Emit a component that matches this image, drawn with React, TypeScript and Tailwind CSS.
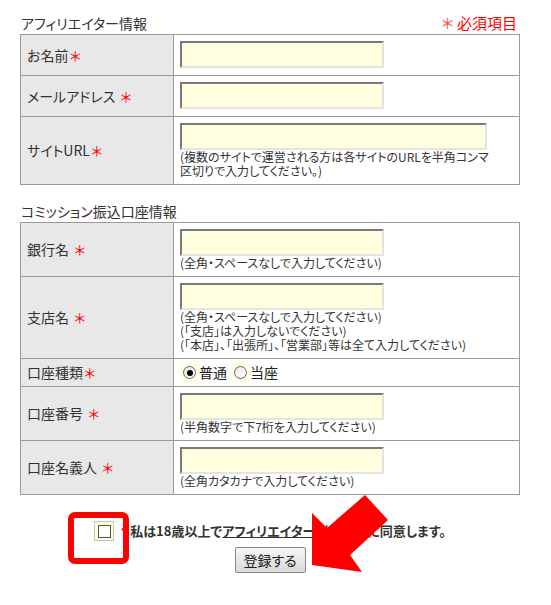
import React from "react";

const font = "font-['Noto_Sans_CJK_JP','Noto_Sans_CJK_SC',sans-serif] [font-feature-settings:'palt']";

function Req({ space }: { space?: boolean }) {
  return <span className={"text-[#ff0000] " + (space ? "ml-[5px]" : "ml-[1px]")}>＊</span>;
}

function TextInput({ wide }: { wide?: boolean }) {
  return (
    <input
      type="text"
      className={
        "block h-[27px] border-2 border-t-[#7a7a7a] border-l-[#7a7a7a] border-r-[#e4e4e4] border-b-[#e4e4e4] bg-[#ffffe0] outline-none " +
        (wide ? "w-[307px]" : "w-[204px]")
      }
    />
  );
}

function Help({ lines }: { lines: string[] }) {
  return (
    <div className="whitespace-nowrap text-[12px] leading-[14px] text-[#333]">
      {lines.map((l) => (
        <div key={l}>{l}</div>
      ))}
    </div>
  );
}

function Row({ label, children, radio }: { label: React.ReactNode; children: React.ReactNode; radio?: boolean }) {
  return (
    <>
      <div className="flex items-center border-r border-b border-[#9a9a9a] bg-[#e8e8e8] pl-[6px] text-[14px] text-[#333]">
        {label}
      </div>
      <div
        className={
          "border-r border-b border-[#9a9a9a] bg-white pl-[6px] " +
          (radio ? "flex h-[28px] items-center" : "pt-[6px] pb-[6px]")
        }
      >
        {children}
      </div>
    </>
  );
}

function Radio({ checked, label }: { checked?: boolean; label: string }) {
  return (
    <span className="inline-flex items-center text-[14px] text-[#222]">
      <span className="flex h-[19px] w-[19px] items-center justify-center bg-[#ffffe0]">
        <span className="flex h-[13px] w-[13px] items-center justify-center rounded-full border border-[#666] bg-gradient-to-br from-[#e8e8e8] to-white">
          {checked && <span className="h-[6px] w-[6px] rounded-full bg-black" />}
        </span>
      </span>
      {label}
    </span>
  );
}

export default function App() {
  return (
    <div className={"relative h-[605px] w-[551px] overflow-hidden bg-white " + font}>
      <div className="ml-[20px] w-[500px]">
        <div className="mt-[14px] mb-[3px] flex h-[17px] items-end justify-between pl-[1px] pr-[3px]">
          <span className="text-[14px] leading-[16px] text-[#333]">アフィリエイター情報</span>
          <span className="text-[15px] leading-[17px] text-[#ff0000]">
            <span className="text-[#ff5050]">＊</span> 必須項目
          </span>
        </div>
        <div className="grid grid-cols-[153px_1fr] border-l border-t border-[#9a9a9a]">
          <Row label={<>お名前<Req /></>}>
            <div className="pb-[1px]">
              <TextInput />
            </div>
          </Row>
          <Row label={<>メールアドレス<Req space /></>}>
            <div className="pb-[1px]">
              <TextInput />
            </div>
          </Row>
          <Row label={<>サイトURL<Req /></>}>
            <TextInput wide />
            <Help lines={["(複数のサイトで運営される方は各サイトのURLを半角コンマ", "区切りで入力してください。)"]} />
          </Row>
        </div>

        <div className="mt-[18px] mb-[3px] pl-[1px] text-[14px] leading-[16px] text-[#333]">
          コミッション振込口座情報
        </div>
        <div className="grid grid-cols-[153px_1fr] border-l border-t border-[#9a9a9a]">
          <Row label={<>銀行名<Req space /></>}>
            <TextInput />
            <Help lines={["(全角・スペースなしで入力してください)"]} />
          </Row>
          <Row label={<>支店名<Req space /></>}>
            <TextInput />
            <Help
              lines={[
                "(全角・スペースなしで入力してください)",
                "(「支店」は入力しないでください)",
                "(「本店」、「出張所」、「営業部」等は全て入力してください)",
              ]}
            />
          </Row>
          <Row label={<>口座種類<Req /></>} radio>
            <div className="flex items-center gap-[4px]">
              <Radio checked label="普通" />
              <Radio label="当座" />
            </div>
          </Row>
          <Row label={<>口座番号<Req space /></>}>
            <TextInput />
            <Help lines={["(半角数字で下7桁を入力してください)"]} />
          </Row>
          <Row label={<>口座名義人<Req space /></>}>
            <TextInput />
            <Help lines={["(全角カタカナで入力してください)"]} />
          </Row>
        </div>

        <div className="mt-[26px] flex h-[20px] items-center justify-center text-[13px] font-bold text-[#333]">
          <span className="flex h-[20px] w-[20px] items-center justify-center border border-[#c9c9b0] bg-[#ffffe0]">
            <span className="h-[13px] w-[13px] border border-[#555] bg-white" />
          </span>
          <span className="ml-[6px] mr-[5px] text-[11px] font-normal text-[#ff0000]">*</span>
          <span>
            私は18歳以上で<span className="underline">アフィリエイター利用規約</span>に同意します。
          </span>
        </div>
        <div className="mt-[6px] flex justify-center">
          <button className="h-[26px] w-[71px] rounded-[2px] border border-[#888] bg-gradient-to-b from-[#f7f7f7] to-[#d9d9d9] text-[14px] text-[#222]">
            登録する
          </button>
        </div>
      </div>

      <div className="absolute left-[68px] top-[512px] h-[52px] w-[61px] rounded-[7px] border-[6px] border-[#ff0000]" />
      <svg className="pointer-events-none absolute left-0 top-0" width="551" height="605" viewBox="0 0 551 605">
        <polygon
          points="312,513 327,528 365,495 388,520 350,555 362,572 312,565"
          fill="#ff0000"
        />
      </svg>
    </div>
  );
}
